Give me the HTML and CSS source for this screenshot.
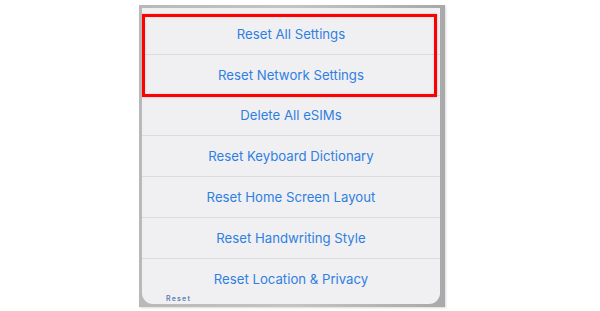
FILE: index.html
```html
<!DOCTYPE html>
<html>
<head>
<meta charset="utf-8">
<link rel="stylesheet" href="styles.css">
</head>
<body>
<div class="frame">
  <div class="sheet">
    <div class="list">
      <div class="row">Reset All Settings</div>
      <div class="row">Reset Network Settings</div>
      <div class="row">Delete All eSIMs</div>
      <div class="row">Reset Keyboard Dictionary</div>
      <div class="row">Reset Home Screen Layout</div>
      <div class="row">Reset Handwriting Style</div>
      <div class="row last">Reset Location &amp; Privacy</div>
    </div>
    <div class="peek">Reset</div>
    <div class="highlight"></div>
  </div>
</div>
</body>
</html>
```

FILE: styles.css
```css
html, body {
  margin: 0;
  padding: 0;
  background: #ffffff;
  width: 600px;
  height: 311px;
  overflow: hidden;
}
.frame {
  margin: 5px 0 0 139px;
  width: 306px;
  height: 302px;
  box-sizing: border-box;
  padding: 3px 5px 3px 3px;
  background: linear-gradient(90deg, #b9b9b9, #c4c4c4 50%, #a9a9a9);
  box-shadow: 1px 1px 2px rgba(0,0,0,0.15);
}
.sheet {
  position: relative;
  width: 298px;
  height: 296px;
  background: #f0f0f2;
  border-radius: 0 0 11px 11px;
  overflow: hidden;
  display: flex;
  flex-direction: column;
}
.list {
  padding-top: 6px;
  display: flex;
  flex-direction: column;
}
.row {
  height: 40.8px;
  box-sizing: border-box;
  border-bottom: 1px solid #dcdce0;
  display: flex;
  align-items: center;
  justify-content: center;
  font-family: Inter, "Liberation Sans", sans-serif;
  font-size: 13.2px;
  color: #2f7fe2;
}
.row.last {
  border-bottom: none;
  height: 36px;
  padding-top: 4px;
}
.peek {
  height: 8px;
  padding-left: 24px;
  font-family: Inter, "Liberation Sans", sans-serif;
  font-size: 7px;
  line-height: 8px;
  letter-spacing: 1.2px;
  font-weight: 600;
  color: #5f7fb8;
}
.highlight {
  position: absolute;
  left: 0;
  top: 6px;
  width: 295px;
  height: 83px;
  box-sizing: border-box;
  border: 3px solid #ff0000;
  box-shadow: inset 0 0 3px rgba(0,0,0,0.12), 0 0 2px rgba(0,0,0,0.25);
}
```
